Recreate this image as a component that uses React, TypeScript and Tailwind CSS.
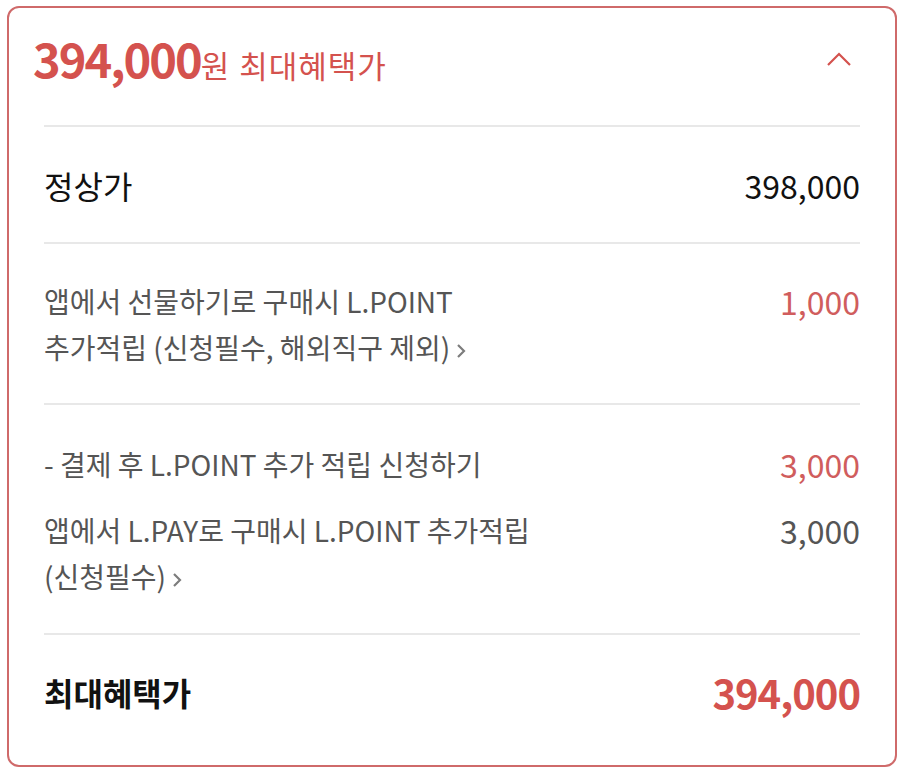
const font = { fontFamily: '"Noto Sans CJK KR", "Noto Sans", sans-serif' }

function Arrow() {
  return (
    <svg className="ml-[6px] inline-block align-middle" width="11" height="18" viewBox="0 0 11 18" fill="none">
      <path d="M2 3l6 6-6 6" stroke="#7d7d7d" strokeWidth="2.2" />
    </svg>
  )
}

function Divider() {
  return <div className="h-[2px] bg-[#e8e8e8]" />
}

export default function App() {
  return (
    <div className="min-h-screen bg-white pl-[7px] pt-[6px]" style={font}>
      <div className="h-[761px] w-[890px] rounded-[12px] border-2 border-[#cf6a6a] bg-white">
        <header className="flex h-[117px] items-center justify-between pb-[16px] pl-[24px] pr-[42px]">
          <div className="flex items-baseline text-[#d4524e]">
            <span className="text-[47px] font-bold tracking-[-2px]">394,000</span>
            <span className="text-[31px]">원</span>
            <span className="ml-[10px] text-[31px] tracking-[1px]">최대혜택가</span>
          </div>
          <svg width="28" height="18" viewBox="0 0 28 18" fill="none">
            <path d="M3 15L14 4l11 11" stroke="#d4524e" strokeWidth="2.2" />
          </svg>
        </header>

        <div className="px-[35px]">
          <Divider />

          <div className="flex h-[115px] items-center justify-between">
            <span className="text-[32px] text-[#111]">정상가</span>
            <span className="text-[32px] text-[#111]">398,000</span>
          </div>

          <Divider />

          <div className="flex justify-between pb-[33px] pt-[34px]">
            <p className="text-[28px] leading-[46px] text-[#555]">
              앱에서 선물하기로 구매시 L.POINT
              <br />
              추가적립 (신청필수, 해외직구 제외)
              <Arrow />
            </p>
            <span className="text-[32px] leading-[46px] text-[#d05d5d]">1,000</span>
          </div>

          <Divider />

          <div className="flex flex-col gap-[20px] pb-[34px] pt-[36px]">
            <div className="flex justify-between">
              <p className="text-[28px] leading-[46px] text-[#555]">- 결제 후 L.POINT 추가 적립 신청하기</p>
              <span className="text-[32px] leading-[46px] text-[#d05d5d]">3,000</span>
            </div>
            <div className="flex justify-between">
              <p className="text-[28px] leading-[46px] text-[#555]">
                앱에서 L.PAY로 구매시 L.POINT 추가적립
                <br />
                (신청필수)
                <Arrow />
              </p>
              <span className="text-[32px] leading-[46px] text-[#555]">3,000</span>
            </div>
          </div>

          <Divider />

          <div className="flex h-[128px] items-center justify-between pb-[14px]">
            <span className="text-[32px] font-bold text-[#111]">최대혜택가</span>
            <span className="text-[40px] font-bold tracking-[-1px] text-[#d4524e]">394,000</span>
          </div>
        </div>
      </div>
    </div>
  )
}
